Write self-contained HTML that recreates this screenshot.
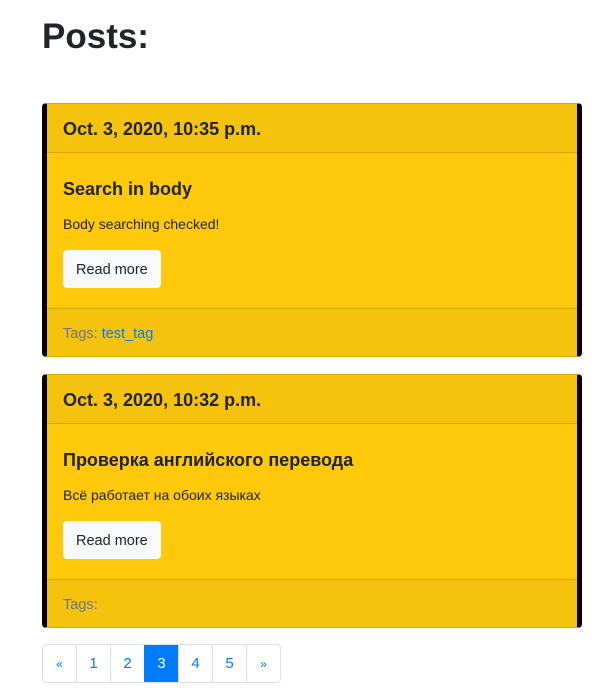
<!DOCTYPE html>
<html><head><meta charset="utf-8"><style>
body{margin:0;background:#fff;font-family:"Liberation Sans",sans-serif;color:#212529;}
h1{position:absolute;left:42px;top:14px;margin:0;font-size:35px;font-weight:700;line-height:46px;}
.card{position:absolute;left:42px;width:540px;box-sizing:border-box;background:#ffc90b;border:1px solid #d9a800;border-left:5px solid #000;border-right:5px solid #000;border-radius:4px;}
.hd{height:49px;background:#f5c20e;border-bottom:1px solid #d6a90a;box-sizing:border-box;padding:0 16px;font-size:18px;font-weight:700;line-height:50px;}
.bd{height:155px;box-sizing:border-box;padding:22px 16px;position:relative;}
.bd h5{margin:0;font-size:18px;font-weight:700;line-height:28px;}
.bd p{margin:10px 0 0;font-size:14px;line-height:22px;}
.btn{position:absolute;left:16px;top:97px;background:#f8f9fa;border-radius:4px;padding:0 13px;height:38px;line-height:40px;font-size:14.5px;}
.ft{height:48px;background:#f5c20e;border-top:1px solid #d6a90a;box-sizing:border-box;padding:0 16px;line-height:50px;font-size:14.5px;color:#6c757d;}
.ft a{color:#007bff;}
.pg{position:absolute;left:42px;top:644px;display:flex;border:1px solid #dee2e6;border-radius:4px;overflow:hidden;}
.pg span{width:33px;height:37px;line-height:38px;text-align:center;color:#007bff;font-size:15px;border-left:1px solid #dee2e6;}
.pg span:first-child{border-left:none;}
.pg .a{background:#007bff;color:#fff;border-color:#007bff;}
</style></head><body>
<h1>Posts:</h1>
<div class="card" style="top:103px"><div class="hd">Oct. 3, 2020, 10:35 p.m.</div>
<div class="bd"><h5>Search in body</h5><p>Body searching checked!</p><div class="btn">Read more</div></div>
<div class="ft">Tags: <a>test_tag</a></div></div>
<div class="card" style="top:374px"><div class="hd">Oct. 3, 2020, 10:32 p.m.</div>
<div class="bd"><h5>Проверка английского перевода</h5><p>Всё работает на обоих языках</p><div class="btn">Read more</div></div>
<div class="ft">Tags:</div></div>
<div class="pg"><span style="font-size:12px">«</span><span>1</span><span>2</span><span class="a">3</span><span>4</span><span>5</span><span style="font-size:12px">»</span></div>
</body></html>
